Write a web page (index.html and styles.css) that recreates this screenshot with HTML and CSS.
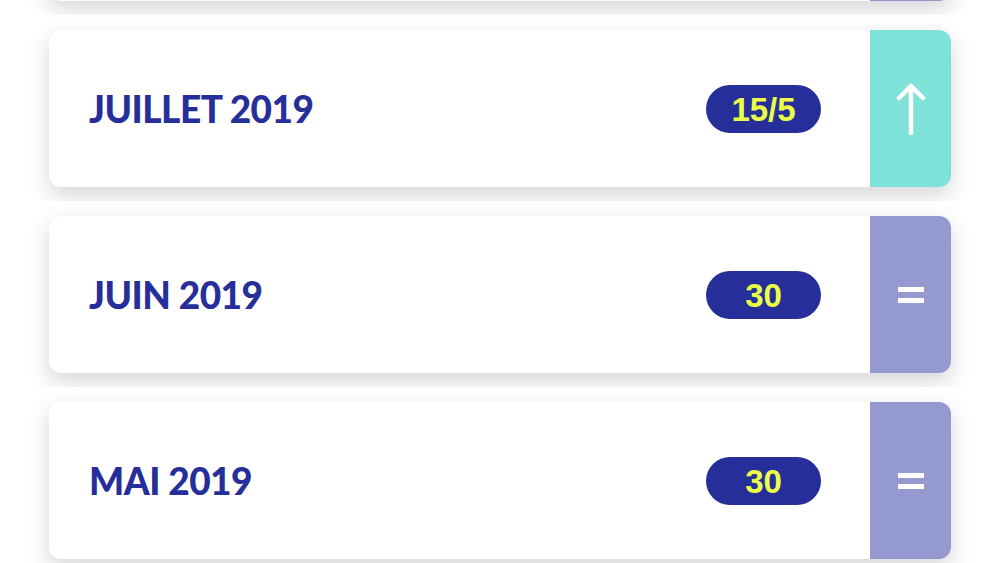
FILE: index.html
```
<!DOCTYPE html>
<html lang="fr">
<head>
  <meta charset="UTF-8" />
  <meta name="viewport" content="width=device-width, initial-scale=1.0"/>
  <title>Historique</title>
  <link rel="stylesheet" href="styles.css">
</head>
<body>

  <ul class="months">
    <!-- only the bottom of the previous month shows at the top -->
    <li class="row prev">
      <div class="card">
        <div class="month"></div>
        <div class="trend same"></div>
      </div>
    </li>
    <li class="row">
      <div class="card">
        <h3 class="month">JUILLET 2019</h3>
        <span class="score">15/5</span>
        <div class="trend up">
          <svg width="30" height="52" viewBox="0 0 30 52">
            <path d="M15 50 V3 M3 15 L15 3 L27 15" fill="none" stroke="#fff" stroke-width="4.5" stroke-linecap="round" stroke-linejoin="round"/>
          </svg>
        </div>
      </div>
    </li>
    <li class="row">
      <div class="card">
        <h3 class="month">JUIN 2019</h3>
        <span class="score">30</span>
        <div class="trend same"><span class="eq"></span></div>
      </div>
    </li>
    <li class="row">
      <div class="card">
        <h3 class="month">MAI 2019</h3>
        <span class="score">30</span>
        <div class="trend same"><span class="eq"></span></div>
      </div>
    </li>
  </ul>

</body>
</html>
```

FILE: styles.css
```
body {
  margin: 0;
  background: #fff;
  font-family: "Lato", "Liberation Sans", sans-serif;
  overflow: hidden;
}

.months {
  list-style: none;
  margin: -171px 0 0;
  padding: 0;
}

.row {
  padding: 15px 49px 14px;
  overflow: hidden;
}

.card {
  display: flex;
  align-items: center;
  height: 157px;
  background: #fff;
  border-radius: 12px;
  box-shadow: 0 8px 22px rgba(0, 0, 0, 0.17);
  overflow: hidden;
}

.month {
  flex: 1;
  margin: 0 0 0 40px;
  color: #262e9a;
  font-size: 37px;
  font-weight: 900;
  letter-spacing: -0.5px;
}

.score {
  width: 115px;
  height: 48px;
  line-height: 49px;
  border-radius: 24px;
  background: #262e9a;
  color: #eaff45;
  text-align: center;
  font-family: "Liberation Sans", Arial, sans-serif;
  font-size: 33px;
  font-weight: bold;
}

.trend {
  width: 81px;
  height: 100%;
  margin-left: 49px;
  display: flex;
  align-items: center;
  justify-content: center;
}

.trend.up {
  background: #7ee2d8;
}

.trend.same {
  background: #9499cf;
}

.eq {
  display: block;
  width: 26px;
  height: 5px;
  background: #fff;
  box-shadow: 0 11px 0 #fff;
  margin-top: -11px;
}
```
